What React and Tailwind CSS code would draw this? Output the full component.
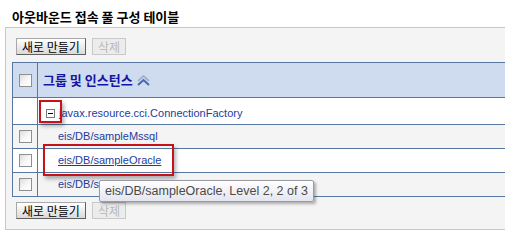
import React from 'react';

const latin = { fontFamily: '"Liberation Sans", "Noto Sans CJK KR", sans-serif' };
const korean = { fontFamily: '"Noto Sans CJK KR", "Liberation Sans", sans-serif' };

const Checkbox = () => (
  <span className="block w-[13px] h-[13px] border border-[#8e8f8f] bg-gradient-to-br from-[#dcdcdc] via-[#f6f6f6] to-white" />
);

const Button = ({ children, disabled }) => (
  <button
    disabled={disabled}
    className={
      disabled
        ? 'h-[17px] px-[5px] text-[12px] leading-[15px] text-[#b9b9b9] bg-[#ececec] border border-[#c9c9c9]'
        : 'h-[17px] px-[5px] text-[12px] leading-[15px] text-black bg-gradient-to-b from-white to-[#dadada] border border-[#a8a8a8] border-r-[#5f5f5f] border-b-[#5f5f5f]'
    }
    style={korean}
  >
    {children}
  </button>
);

const ButtonBar = () => (
  <div className="flex gap-[6px] pl-[10px]">
    <Button>새로 만들기</Button>
    <Button disabled>삭제</Button>
  </div>
);

const SortIcon = () => (
  <svg width="15" height="12" viewBox="0 0 15 12" className="ml-[3px]">
    <path d="M2 7 L7.5 2 L13 7" fill="none" stroke="#9fb2d6" strokeWidth="2" />
    <path d="M2 11 L7.5 6 L13 11" fill="none" stroke="#4a68a6" strokeWidth="2" />
  </svg>
);

const ExpandIcon = () => (
  <span className="relative block w-[9px] h-[9px] border border-[#7a7a7a] bg-white">
    <span className="absolute left-[1px] top-[3px] w-[5px] h-[1px] bg-black" />
  </span>
);

const rows = [
  { name: 'eis/DB/sampleMssql', bg: 'bg-[#f4f4f4]' },
  { name: 'eis/DB/sampleOracle', bg: 'bg-white', hover: true },
  { name: 'eis/DB/sampleSybase', bg: 'bg-[#f4f4f4]' },
];

export default function App() {
  return (
    <div className="relative w-[505px] h-[245px] overflow-hidden bg-white" style={latin}>
      {/* Title */}
      <div className="h-[27px] pl-[12px] pt-[9px] text-[13px] leading-[16px] font-bold text-black" style={korean}>
        아웃바운드 접속 풀 구성 테이블
      </div>

      {/* Panel */}
      <div className="ml-[5px] w-[540px] border-t border-l border-b border-[#c8c8c8] bg-[#f4f4f4] pt-[10px] pb-[10px]">
        <ButtonBar />

        <div className="ml-[6px] mt-[7px] mb-[5px] border-t border-l border-[#5577a0]">
          {/* Header */}
          <div className="flex h-[35px] bg-[#cfdcef] border-b border-[#5577a0]">
            <div className="w-[25px] border-r border-[#5577a0] flex items-center justify-center">
              <Checkbox />
            </div>
            <div className="flex items-center pl-[5px] text-[13px] font-bold text-[#1515a3]" style={korean}>
              그룹 및 인스턴스
              <SortIcon />
            </div>
          </div>

          {/* Group row */}
          <div className="flex h-[27px] bg-white border-b border-[#5577a0]">
            <div className="w-[25px] border-r border-[#5577a0]" />
            <div className="flex items-center pl-[8px] pt-[4px] gap-[4px] text-[11px] text-[#1c3d9e]">
              <ExpandIcon />
              <span>javax.resource.cci.ConnectionFactory</span>
            </div>
          </div>

          {rows.map((r) => (
            <div key={r.name} className={`flex h-[24px] border-b border-[#5577a0] ${r.bg}`}>
              <div className="w-[25px] border-r border-[#5577a0] flex items-center justify-center">
                <Checkbox />
              </div>
              <div className="flex items-center pl-[20px] text-[11px] text-[#1c3d9e]">
                <span className={r.hover ? 'underline' : ''}>{r.name}</span>
              </div>
            </div>
          ))}
        </div>

        <ButtonBar />
      </div>

      {/* Highlight boxes */}
      <div className="absolute left-[39px] top-[100px] w-[23px] h-[23px] border-2 border-[#c4131b] shadow-[2px_3px_4px_rgba(0,0,0,0.3)]" />
      <div className="absolute left-[43px] top-[144px] w-[131px] h-[32px] border-2 border-[#c4131b] shadow-[2px_3px_4px_rgba(0,0,0,0.3)]" />

      {/* Tooltip */}
      <div className="absolute left-[99px] top-[180px] h-[22px] px-[5px] flex items-center rounded-[2px] border border-[#9a9aa6] bg-gradient-to-b from-white to-[#e4e5f0] text-[12.5px] text-[#4a4a4a] shadow-[2px_2px_3px_rgba(0,0,0,0.3)] whitespace-nowrap">
        eis/DB/sampleOracle, Level 2, 2 of 3
      </div>
    </div>
  );
}
